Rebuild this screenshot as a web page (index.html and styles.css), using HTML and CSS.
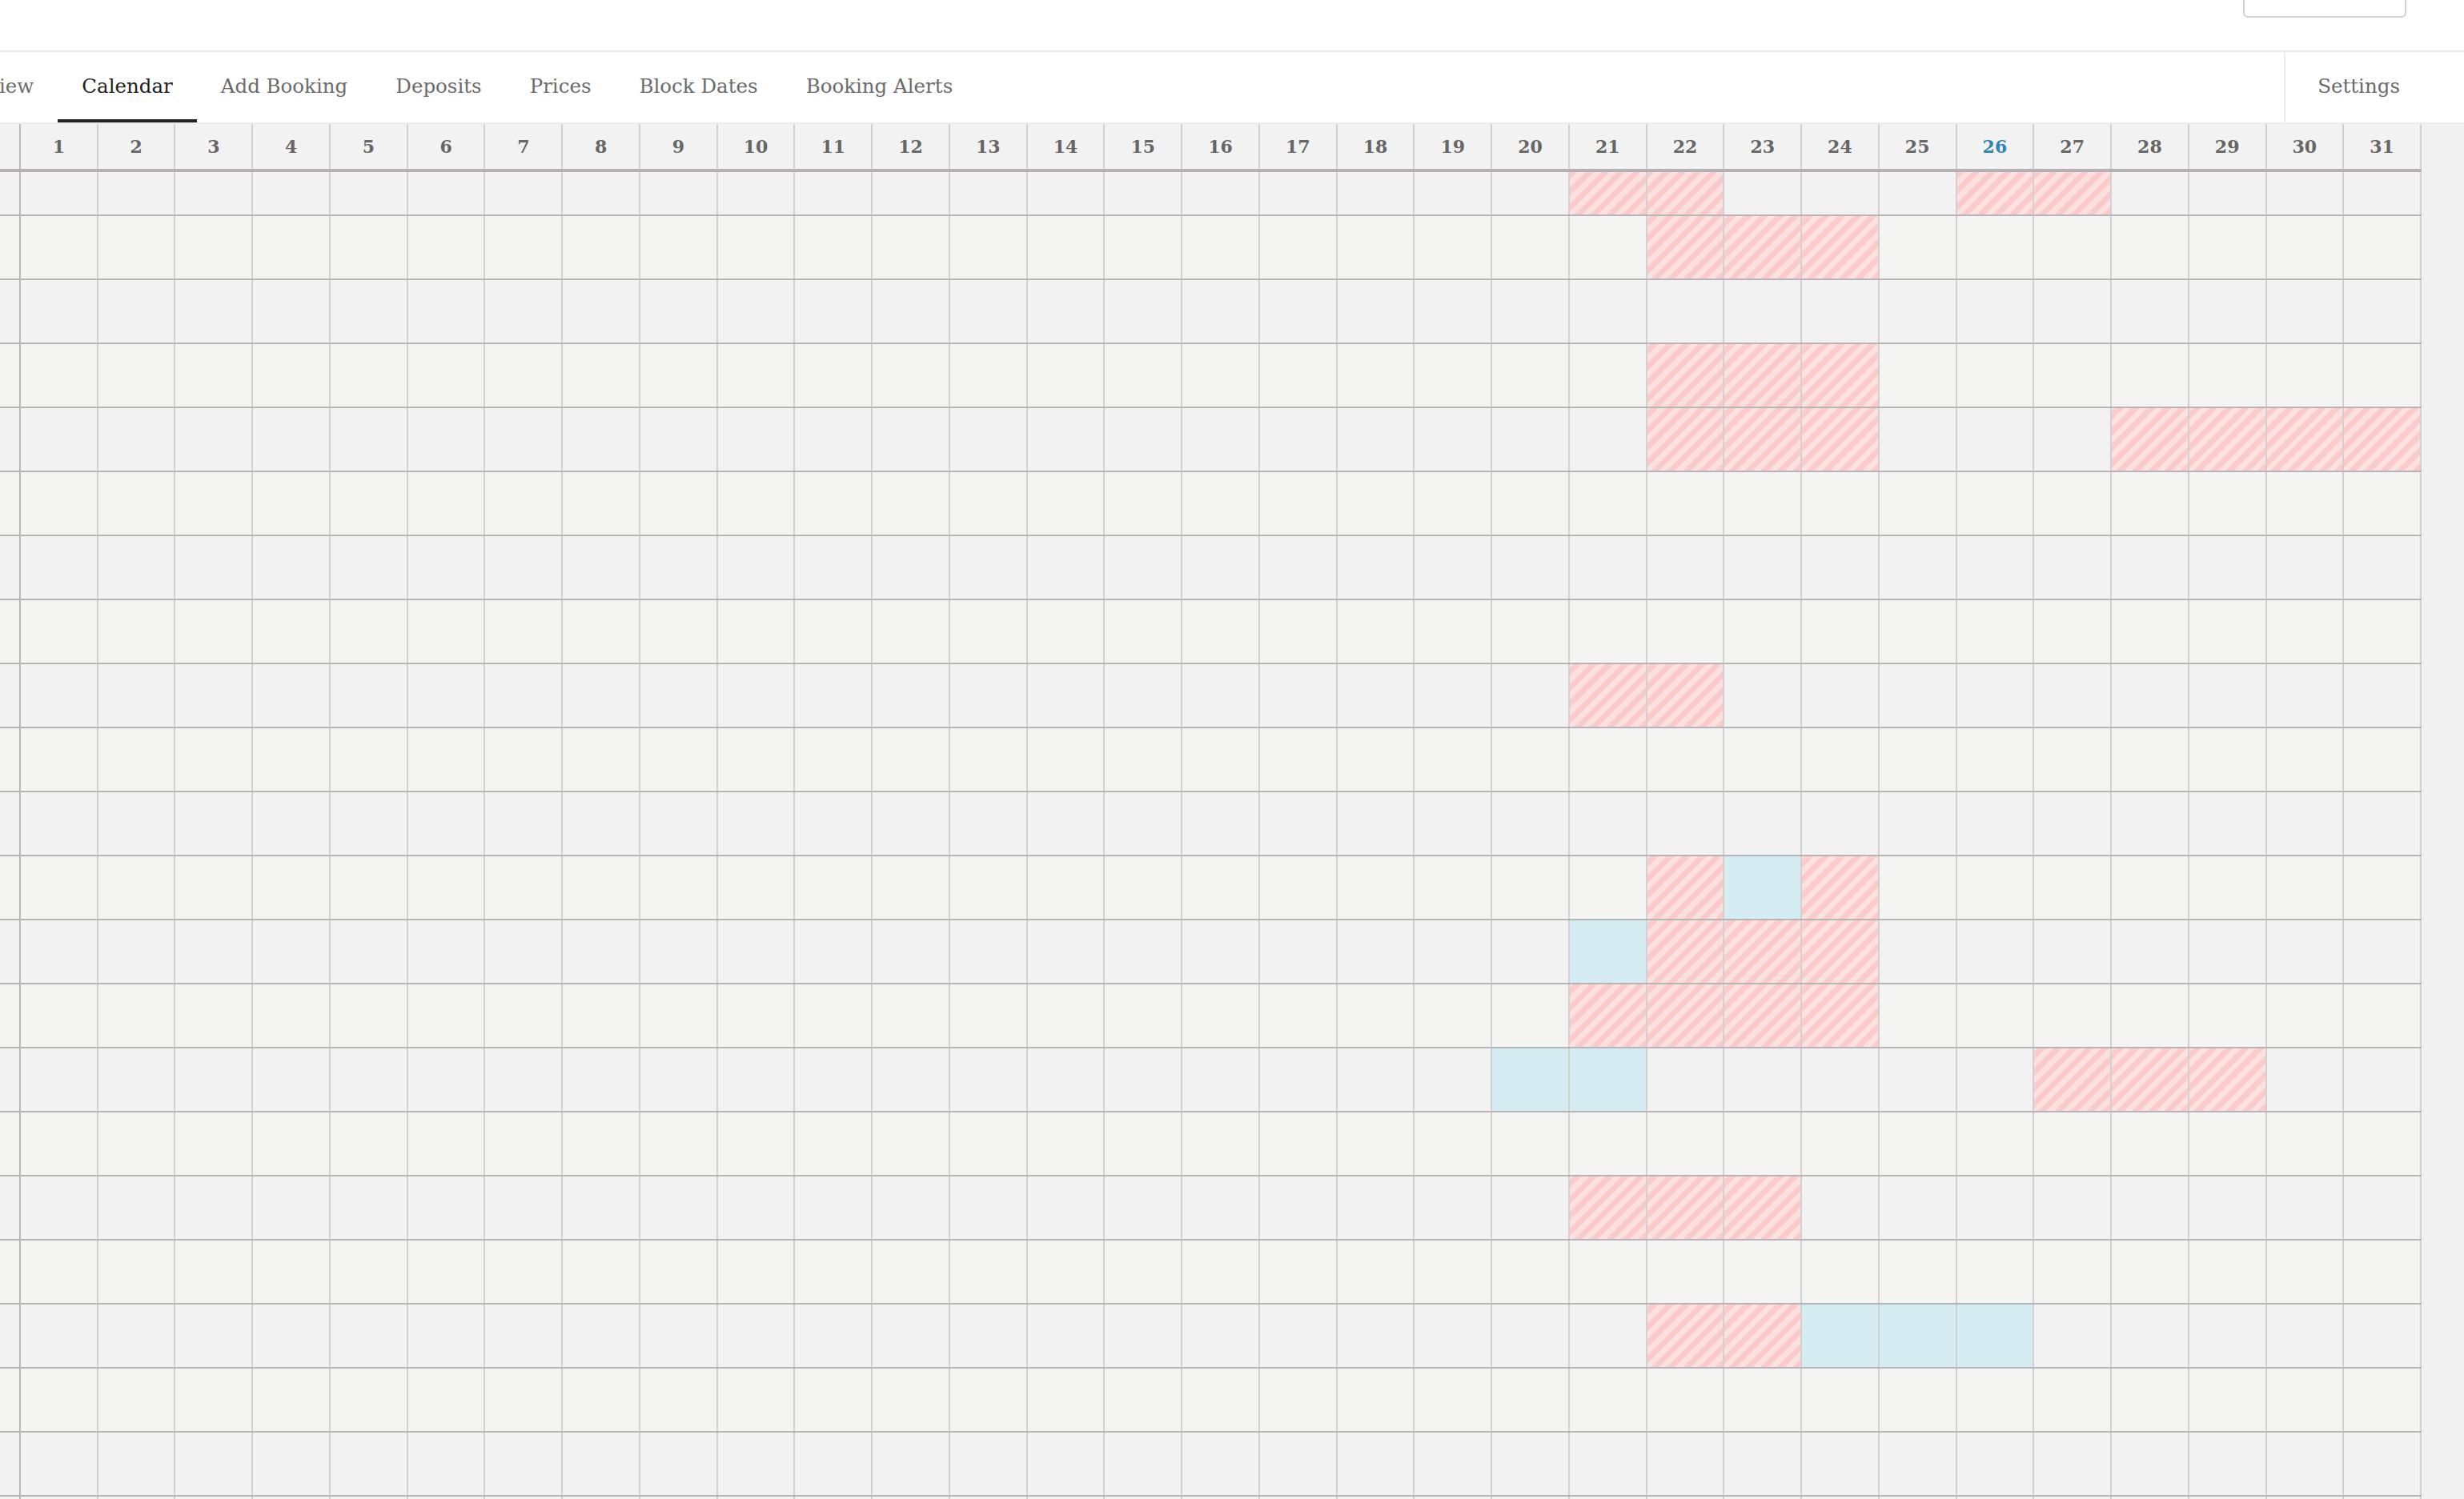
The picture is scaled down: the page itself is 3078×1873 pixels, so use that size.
FILE: index.html
```html
<!DOCTYPE html>
<html lang="en">
<head>
<meta charset="utf-8">
<title>Calendar</title>
<link rel="stylesheet" href="styles.css">
</head>
<body>
<header class="topbar">
  <button class="menu-btn" type="button" aria-label="Menu"></button>
</header>
<nav class="tabs">
  <div class="tab-list">
    <a class="tab">Overview</a>
    <a class="tab active">Calendar</a>
    <a class="tab">Add Booking</a>
    <a class="tab">Deposits</a>
    <a class="tab">Prices</a>
    <a class="tab">Block Dates</a>
    <a class="tab">Booking Alerts</a>
  </div>
  <a class="tab tab-settings">Settings</a>
</nav>
<main class="cal-wrap">
  <div class="cal">
    <div class="cal-head">
      <div class="lbl"></div>
      <div class="day">1</div><div class="day">2</div><div class="day">3</div><div class="day">4</div><div class="day">5</div><div class="day">6</div><div class="day">7</div><div class="day">8</div><div class="day">9</div><div class="day">10</div>
      <div class="day">11</div><div class="day">12</div><div class="day">13</div><div class="day">14</div><div class="day">15</div><div class="day">16</div><div class="day">17</div><div class="day">18</div><div class="day">19</div><div class="day">20</div>
      <div class="day">21</div><div class="day">22</div><div class="day">23</div><div class="day">24</div><div class="day">25</div><div class="day today">26</div><div class="day">27</div><div class="day">28</div><div class="day">29</div><div class="day">30</div><div class="day">31</div>
    </div>
    <div class="cal-body">
      <!-- r0 -->
      <div class="row partial"><span class="lbl"></span>
        <span></span><span></span><span></span><span></span><span></span><span></span><span></span><span></span><span></span><span></span>
        <span></span><span></span><span></span><span></span><span></span><span></span><span></span><span></span><span></span><span></span>
        <span class="bk"></span><span class="bk"></span><span></span><span></span><span></span><span class="bk"></span><span class="bk"></span><span></span><span></span><span></span><span></span>
      </div>
      <!-- r1 -->
      <div class="row"><span class="lbl"></span>
        <span></span><span></span><span></span><span></span><span></span><span></span><span></span><span></span><span></span><span></span>
        <span></span><span></span><span></span><span></span><span></span><span></span><span></span><span></span><span></span><span></span>
        <span></span><span class="bk"></span><span class="bk"></span><span class="bk"></span><span></span><span></span><span></span><span></span><span></span><span></span><span></span>
      </div>
      <!-- r2 -->
      <div class="row"><span class="lbl"></span>
        <span></span><span></span><span></span><span></span><span></span><span></span><span></span><span></span><span></span><span></span>
        <span></span><span></span><span></span><span></span><span></span><span></span><span></span><span></span><span></span><span></span>
        <span></span><span></span><span></span><span></span><span></span><span></span><span></span><span></span><span></span><span></span><span></span>
      </div>
      <!-- r3 -->
      <div class="row"><span class="lbl"></span>
        <span></span><span></span><span></span><span></span><span></span><span></span><span></span><span></span><span></span><span></span>
        <span></span><span></span><span></span><span></span><span></span><span></span><span></span><span></span><span></span><span></span>
        <span></span><span class="bk"></span><span class="bk"></span><span class="bk"></span><span></span><span></span><span></span><span></span><span></span><span></span><span></span>
      </div>
      <!-- r4 -->
      <div class="row"><span class="lbl"></span>
        <span></span><span></span><span></span><span></span><span></span><span></span><span></span><span></span><span></span><span></span>
        <span></span><span></span><span></span><span></span><span></span><span></span><span></span><span></span><span></span><span></span>
        <span></span><span class="bk"></span><span class="bk"></span><span class="bk"></span><span></span><span></span><span></span><span class="bk"></span><span class="bk"></span><span class="bk"></span><span class="bk"></span>
      </div>
      <!-- r5 -->
      <div class="row"><span class="lbl"></span>
        <span></span><span></span><span></span><span></span><span></span><span></span><span></span><span></span><span></span><span></span>
        <span></span><span></span><span></span><span></span><span></span><span></span><span></span><span></span><span></span><span></span>
        <span></span><span></span><span></span><span></span><span></span><span></span><span></span><span></span><span></span><span></span><span></span>
      </div>
      <!-- r6 -->
      <div class="row"><span class="lbl"></span>
        <span></span><span></span><span></span><span></span><span></span><span></span><span></span><span></span><span></span><span></span>
        <span></span><span></span><span></span><span></span><span></span><span></span><span></span><span></span><span></span><span></span>
        <span></span><span></span><span></span><span></span><span></span><span></span><span></span><span></span><span></span><span></span><span></span>
      </div>
      <!-- r7 -->
      <div class="row"><span class="lbl"></span>
        <span></span><span></span><span></span><span></span><span></span><span></span><span></span><span></span><span></span><span></span>
        <span></span><span></span><span></span><span></span><span></span><span></span><span></span><span></span><span></span><span></span>
        <span></span><span></span><span></span><span></span><span></span><span></span><span></span><span></span><span></span><span></span><span></span>
      </div>
      <!-- r8 -->
      <div class="row"><span class="lbl"></span>
        <span></span><span></span><span></span><span></span><span></span><span></span><span></span><span></span><span></span><span></span>
        <span></span><span></span><span></span><span></span><span></span><span></span><span></span><span></span><span></span><span></span>
        <span class="bk"></span><span class="bk"></span><span></span><span></span><span></span><span></span><span></span><span></span><span></span><span></span><span></span>
      </div>
      <!-- r9 -->
      <div class="row"><span class="lbl"></span>
        <span></span><span></span><span></span><span></span><span></span><span></span><span></span><span></span><span></span><span></span>
        <span></span><span></span><span></span><span></span><span></span><span></span><span></span><span></span><span></span><span></span>
        <span></span><span></span><span></span><span></span><span></span><span></span><span></span><span></span><span></span><span></span><span></span>
      </div>
      <!-- r10 -->
      <div class="row"><span class="lbl"></span>
        <span></span><span></span><span></span><span></span><span></span><span></span><span></span><span></span><span></span><span></span>
        <span></span><span></span><span></span><span></span><span></span><span></span><span></span><span></span><span></span><span></span>
        <span></span><span></span><span></span><span></span><span></span><span></span><span></span><span></span><span></span><span></span><span></span>
      </div>
      <!-- r11 -->
      <div class="row"><span class="lbl"></span>
        <span></span><span></span><span></span><span></span><span></span><span></span><span></span><span></span><span></span><span></span>
        <span></span><span></span><span></span><span></span><span></span><span></span><span></span><span></span><span></span><span></span>
        <span></span><span class="bk"></span><span class="hd"></span><span class="bk"></span><span></span><span></span><span></span><span></span><span></span><span></span><span></span>
      </div>
      <!-- r12 -->
      <div class="row"><span class="lbl"></span>
        <span></span><span></span><span></span><span></span><span></span><span></span><span></span><span></span><span></span><span></span>
        <span></span><span></span><span></span><span></span><span></span><span></span><span></span><span></span><span></span><span></span>
        <span class="hd"></span><span class="bk"></span><span class="bk"></span><span class="bk"></span><span></span><span></span><span></span><span></span><span></span><span></span><span></span>
      </div>
      <!-- r13 -->
      <div class="row"><span class="lbl"></span>
        <span></span><span></span><span></span><span></span><span></span><span></span><span></span><span></span><span></span><span></span>
        <span></span><span></span><span></span><span></span><span></span><span></span><span></span><span></span><span></span><span></span>
        <span class="bk"></span><span class="bk"></span><span class="bk"></span><span class="bk"></span><span></span><span></span><span></span><span></span><span></span><span></span><span></span>
      </div>
      <!-- r14 -->
      <div class="row"><span class="lbl"></span>
        <span></span><span></span><span></span><span></span><span></span><span></span><span></span><span></span><span></span><span></span>
        <span></span><span></span><span></span><span></span><span></span><span></span><span></span><span></span><span></span><span class="hd"></span>
        <span class="hd"></span><span></span><span></span><span></span><span></span><span></span><span class="bk"></span><span class="bk"></span><span class="bk"></span><span></span><span></span>
      </div>
      <!-- r15 -->
      <div class="row"><span class="lbl"></span>
        <span></span><span></span><span></span><span></span><span></span><span></span><span></span><span></span><span></span><span></span>
        <span></span><span></span><span></span><span></span><span></span><span></span><span></span><span></span><span></span><span></span>
        <span></span><span></span><span></span><span></span><span></span><span></span><span></span><span></span><span></span><span></span><span></span>
      </div>
      <!-- r16 -->
      <div class="row"><span class="lbl"></span>
        <span></span><span></span><span></span><span></span><span></span><span></span><span></span><span></span><span></span><span></span>
        <span></span><span></span><span></span><span></span><span></span><span></span><span></span><span></span><span></span><span></span>
        <span class="bk"></span><span class="bk"></span><span class="bk"></span><span></span><span></span><span></span><span></span><span></span><span></span><span></span><span></span>
      </div>
      <!-- r17 -->
      <div class="row"><span class="lbl"></span>
        <span></span><span></span><span></span><span></span><span></span><span></span><span></span><span></span><span></span><span></span>
        <span></span><span></span><span></span><span></span><span></span><span></span><span></span><span></span><span></span><span></span>
        <span></span><span></span><span></span><span></span><span></span><span></span><span></span><span></span><span></span><span></span><span></span>
      </div>
      <!-- r18 -->
      <div class="row"><span class="lbl"></span>
        <span></span><span></span><span></span><span></span><span></span><span></span><span></span><span></span><span></span><span></span>
        <span></span><span></span><span></span><span></span><span></span><span></span><span></span><span></span><span></span><span></span>
        <span></span><span class="bk"></span><span class="bk"></span><span class="hd"></span><span class="hd"></span><span class="hd"></span><span></span><span></span><span></span><span></span><span></span>
      </div>
      <!-- r19 -->
      <div class="row"><span class="lbl"></span>
        <span></span><span></span><span></span><span></span><span></span><span></span><span></span><span></span><span></span><span></span>
        <span></span><span></span><span></span><span></span><span></span><span></span><span></span><span></span><span></span><span></span>
        <span></span><span></span><span></span><span></span><span></span><span></span><span></span><span></span><span></span><span></span><span></span>
      </div>
      <!-- r20 -->
      <div class="row"><span class="lbl"></span>
        <span></span><span></span><span></span><span></span><span></span><span></span><span></span><span></span><span></span><span></span>
        <span></span><span></span><span></span><span></span><span></span><span></span><span></span><span></span><span></span><span></span>
        <span></span><span></span><span></span><span></span><span></span><span></span><span></span><span></span><span></span><span></span><span></span>
      </div>
      <!-- r21 -->
      <div class="row"><span class="lbl"></span>
        <span></span><span></span><span></span><span></span><span></span><span></span><span></span><span></span><span></span><span></span>
        <span></span><span></span><span></span><span></span><span></span><span></span><span></span><span></span><span></span><span></span>
        <span></span><span></span><span></span><span></span><span></span><span></span><span></span><span></span><span></span><span></span><span></span>
      </div>
    </div>
  </div>
</main>
</body>
</html>
```
FILE: styles.css
```css
* {
  box-sizing: border-box;
  margin: 0;
  padding: 0;
}

html, body {
  height: 100%;
  overflow: hidden;
}

body {
  font-family: "DejaVu Serif", "Liberation Serif", serif;
  background: #f1f1f1;
  color: #666;
}

/* top bar */
.topbar {
  height: 65px;
  background: #fff;
  border-bottom: 2px solid #e9e9e9;
  display: flex;
  justify-content: flex-end;
  align-items: flex-start;
  padding-right: 72px;
}

.menu-btn {
  width: 204px;
  height: 44px;
  margin-top: -22px;
  background: #fff;
  border: 2px solid #d2d2d2;
  border-radius: 6px;
}

/* tabs */
.tabs {
  height: 90px;
  background: #fff;
  border-bottom: 2px solid #ececec;
  display: flex;
  overflow: hidden;
}

.tab-list {
  display: flex;
  margin-left: -105px;
}

.tab {
  display: flex;
  align-items: center;
  height: 88px;
  padding: 0 30px 4px;
  font-size: 24.5px;
  color: #6b6b6b;
  white-space: nowrap;
  cursor: pointer;
}

.tab.active {
  color: #222;
  box-shadow: inset 0 -4px 0 #222;
}

.tab-settings {
  margin-left: auto;
  margin-right: 40px;
  padding: 0 40px 4px;
  border-left: 2px solid #ebebeb;
}

/* calendar */
.cal-wrap {
  background: #f1f1f1;
}

.cal {
  width: 3025px;
}

.cal-head,
.row {
  display: grid;
  grid-template-columns: 26px repeat(31, 1fr);
}

.cal-head {
  height: 60px;
  background: #f2f2f2;
  border-bottom: 4px solid #b5b1b1;
}

.cal-head .lbl {
  border-right: 2px solid #b8b8b8;
}

.cal-head .day {
  display: flex;
  align-items: center;
  justify-content: center;
  border-right: 2px solid #d3d0d0;
  font-size: 22px;
  font-weight: 700;
  color: #666;
}

.cal-head .day.today {
  color: #2b87b3;
}

.row {
  height: 80px;
  border-bottom: 2px solid #b5b5b5;
}

.row.partial {
  height: 55px;
}

.cal-body .row:nth-child(odd) {
  background: #f2f2f2;
}

.cal-body .row:nth-child(even) {
  background: #f4f4f2;
}

.row span {
  border-right: 2px solid #d3d0d0;
}

.row .lbl {
  border-right-color: #b8b8b8;
}

.row .bk {
  background: repeating-linear-gradient(-45deg, #fbcaca 0 7px, #fde1e1 7px 14px);
}

.row .hd {
  background: #d5ecf2;
}
```
